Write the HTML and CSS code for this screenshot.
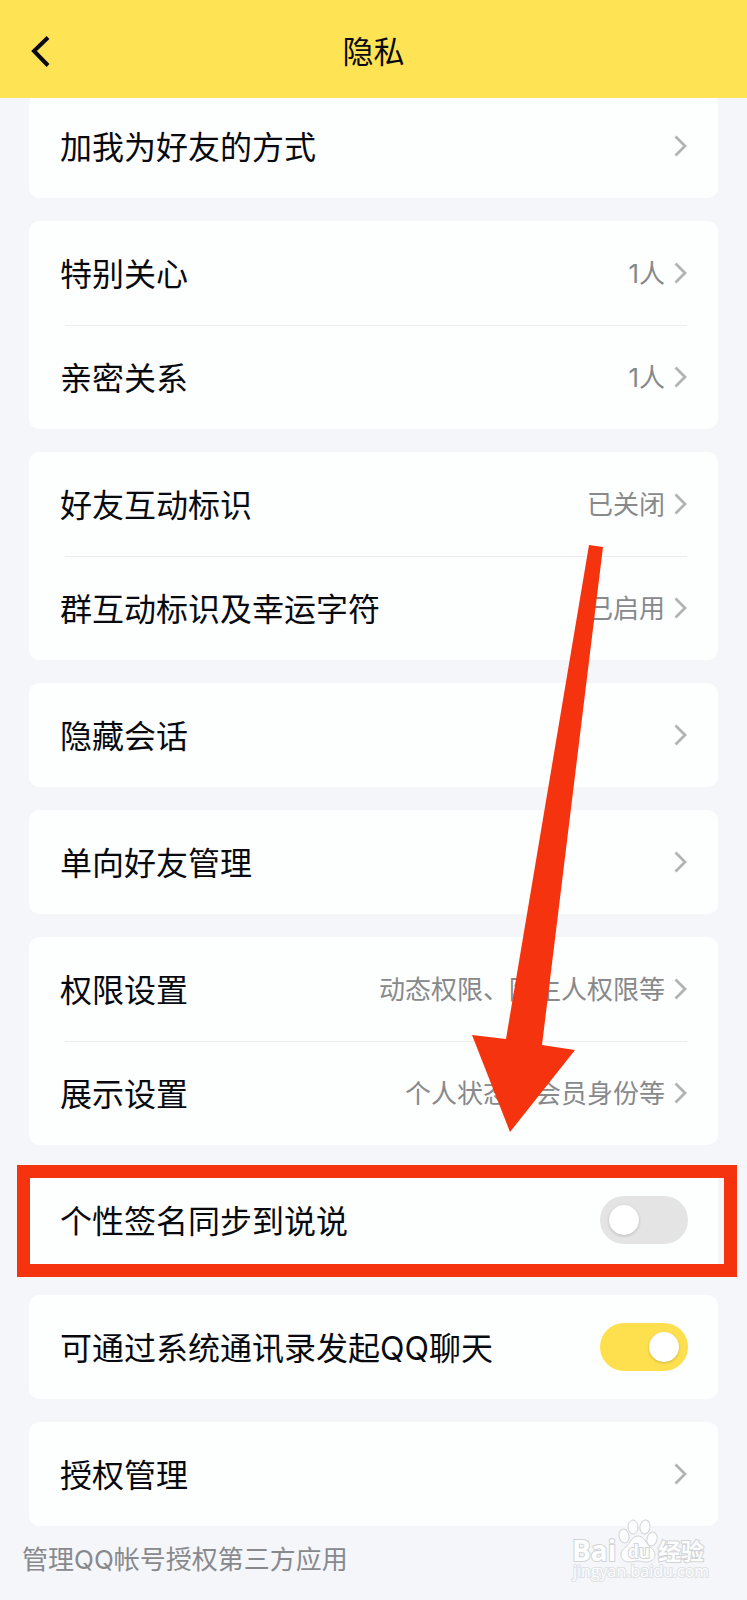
FILE: index.html
```html
<!DOCTYPE html>
<html lang="zh-CN">
<head>
    <meta charset="UTF-8">
    <meta name="viewport" content="width=device-width, initial-scale=1.0">
    <title>隐私</title>
    <link rel="stylesheet" href="styles.css">
</head>
<body>
    <svg class="defs" width="0" height="0" aria-hidden="true">
        <symbol id="chevron" viewBox="0 0 14 24">
            <path d="M1.5 2.5 L11 12 L1.5 21.5" fill="none" stroke="currentColor" stroke-width="2.8"/>
        </symbol>
    </svg>

    <header class="header">
        <button class="back" type="button" aria-label="返回">
            <svg width="20" height="34" viewBox="0 0 20 34">
                <path d="M18 2.5 L4 16 L18 30.5" fill="none" stroke="currentColor" stroke-width="4"/>
            </svg>
        </button>
        <h1>隐私</h1>
    </header>

    <main class="settings">
        <section class="card">
            <a class="row" href="#"><span class="name">加我为好友的方式</span><svg class="chevron"><use href="#chevron"/></svg></a>
        </section>

        <section class="card">
            <a class="row" href="#"><span class="name">特别关心</span><span class="value">1人</span><svg class="chevron"><use href="#chevron"/></svg></a>
            <a class="row" href="#"><span class="name">亲密关系</span><span class="value">1人</span><svg class="chevron"><use href="#chevron"/></svg></a>
        </section>

        <section class="card">
            <a class="row" href="#"><span class="name">好友互动标识</span><span class="value">已关闭</span><svg class="chevron"><use href="#chevron"/></svg></a>
            <a class="row" href="#"><span class="name">群互动标识及幸运字符</span><span class="value">已启用</span><svg class="chevron"><use href="#chevron"/></svg></a>
        </section>

        <section class="card">
            <a class="row" href="#"><span class="name">隐藏会话</span><svg class="chevron"><use href="#chevron"/></svg></a>
        </section>

        <section class="card">
            <a class="row" href="#"><span class="name">单向好友管理</span><svg class="chevron"><use href="#chevron"/></svg></a>
        </section>

        <section class="card">
            <a class="row" href="#"><span class="name">权限设置</span><span class="value">动态权限、陌生人权限等</span><svg class="chevron"><use href="#chevron"/></svg></a>
            <a class="row" href="#"><span class="name">展示设置</span><span class="value">个人状态、会员身份等</span><svg class="chevron"><use href="#chevron"/></svg></a>
        </section>

        <section class="card highlight">
            <div class="row">
                <label class="name" for="sync-signature">个性签名同步到说说</label>
                <input class="switch" type="checkbox" id="sync-signature">
            </div>
        </section>

        <section class="card">
            <div class="row">
                <label class="name" for="contacts-chat">可通过系统通讯录发起QQ聊天</label>
                <input class="switch" type="checkbox" id="contacts-chat" checked>
            </div>
        </section>

        <section class="card">
            <a class="row" href="#"><span class="name">授权管理</span><svg class="chevron"><use href="#chevron"/></svg></a>
        </section>
    </main>

    <p class="note">管理QQ帐号授权第三方应用</p>

    <svg class="arrow" width="104" height="588" viewBox="0 0 104 588" aria-hidden="true">
        <path d="M117 0 L131 2 L70 500 L103 505 L38 587 L0 490 L34 494 Z" fill="#f5330f"/>
    </svg>

    <svg class="watermark" width="140" height="70" viewBox="0 0 140 70">
        <g fill="#fcfdfd" stroke="#d2d3d6" stroke-width="1">
            <text class="mark-big" x="2" y="43">Bai</text>
            <ellipse cx="54" cy="18" rx="5" ry="7" transform="rotate(-12 54 18)"/>
            <ellipse cx="63" cy="9" rx="5" ry="7"/>
            <ellipse cx="75" cy="9" rx="5" ry="7" transform="rotate(8 75 9)"/>
            <ellipse cx="82" cy="21" rx="5" ry="7" transform="rotate(14 82 21)"/>
            <path d="M68 18 C74 18 76 25 80 29 C88 34 86 44 76 44 C71 44 72 43 68 43 C64 43 64 44 59 44 C50 44 48 34 56 29 C60 25 62 18 68 18 Z"/>
            <text class="mark-du" x="58" y="40">du</text>
            <text class="mark-cn" x="88" y="42">经验</text>
            <text class="mark-url" x="3" y="59">jingyan.baidu.com</text>
        </g>
    </svg>
</body>
</html>
```

FILE: styles.css
```css
*{
    box-sizing: border-box;
}
body{
    margin: 0;
    position: relative;
    min-height: 100vh;
    background-color: #f5f6f9;
    color: #080a10;
    font-family: Inter, "Noto Sans CJK SC", sans-serif;
    overflow-x: hidden;
}
.defs{
    position: absolute;
}
.header{
    position: sticky;
    top: 0;
    z-index: 1;
    display: grid;
    grid-template-columns: 60px 1fr 60px;
    align-items: center;
    height: 98px;
    padding-top: 6px;
    background-color: #fee455;
}
.header h1{
    margin: 0;
    text-align: center;
    font-size: 31px;
    font-weight: 400;
    line-height: 40px;
}
.back{
    display: flex;
    justify-content: flex-end;
    padding: 0 10px 0 0;
    border: 0;
    background: none;
    color: #080a10;
}
/* the first card is partly scrolled under the header */
.settings{
    display: flex;
    flex-direction: column;
    gap: 23px;
    margin-top: -4px;
    padding: 0 29px;
}
.card{
    position: relative;
    border-radius: 10px;
    background-color: #fdfefe;
}
.row{
    display: flex;
    align-items: center;
    height: 104px;
    padding: 0 30px 0 31px;
    color: inherit;
    text-decoration: none;
}
.row + .row{
    background: linear-gradient(#ececef, #ececef) no-repeat 36px 0 / calc(100% - 67px) 1px;
}
.name{
    flex: 1;
    padding-top: 3px;
    font-size: 32px;
    line-height: 48px;
}
.value{
    padding-top: 2px;
    color: #88898b;
    font-size: 26px;
    line-height: 40px;
}
.chevron{
    width: 14px;
    height: 24px;
    margin-left: 9px;
    color: #b2b3b5;
}
.switch{
    appearance: none;
    display: flex;
    width: 88px;
    height: 48px;
    margin: 0;
    padding: 9px;
    border-radius: 24px;
    background-color: #e4e4e5;
}
.switch::before{
    content: "";
    width: 30px;
    height: 30px;
    border-radius: 50%;
    background-color: #fff;
    box-shadow: 0 1px 3px rgba(0, 0, 0, 0.2);
}
.switch:checked{
    justify-content: flex-end;
    background-color: #fee04f;
}
.highlight::after{
    content: "";
    position: absolute;
    top: -3px;
    right: -19px;
    bottom: -5px;
    left: -12px;
    border: 13px solid #f5330f;
    pointer-events: none;
}
.note{
    margin: 15px 22px 0;
    padding-bottom: 21px;
    color: #88898d;
    font-size: 26px;
    line-height: 38px;
}
.arrow{
    position: absolute;
    top: 545px;
    right: 171px;
    overflow: visible;
    pointer-events: none;
}
.watermark{
    position: absolute;
    right: 37px;
    bottom: 12px;
    pointer-events: none;
}
.watermark text{
    font-family: "Open Sans", "Noto Sans CJK SC", sans-serif;
    paint-order: stroke;
    stroke-width: 2px;
}
.watermark .mark-big{
    font-size: 28px;
    font-weight: 700;
}
.watermark .mark-du{
    font-size: 17px;
    font-weight: 700;
}
.watermark .mark-cn{
    font-size: 23px;
    font-weight: 700;
}
.watermark .mark-url{
    font-size: 16px;
    stroke: #e0e1e4;
}
```
